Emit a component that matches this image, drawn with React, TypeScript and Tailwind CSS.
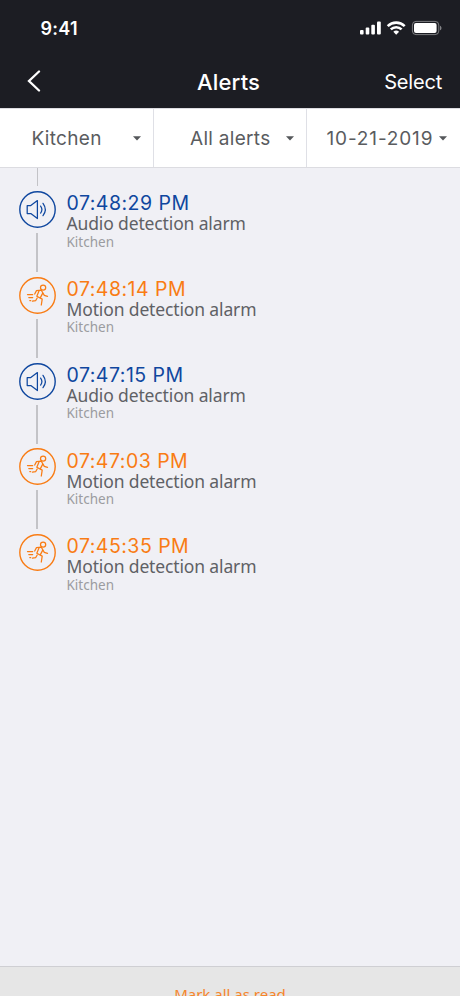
type AlertKind = 'audio' | 'motion';

interface AlertItem {
  id: number;
  kind: AlertKind;
  time: string;
  room: string;
}

const ALERTS: AlertItem[] = [
  { id: 1, kind: 'audio', time: '07:48:29 PM', room: 'Kitchen' },
  { id: 2, kind: 'motion', time: '07:48:14 PM', room: 'Kitchen' },
  { id: 3, kind: 'audio', time: '07:47:15 PM', room: 'Kitchen' },
  { id: 4, kind: 'motion', time: '07:47:03 PM', room: 'Kitchen' },
  { id: 5, kind: 'motion', time: '07:45:35 PM', room: 'Kitchen' },
];

const KIND_LABEL: Record<AlertKind, string> = {
  audio: 'Audio detection alarm',
  motion: 'Motion detection alarm',
};

const KIND_COLOR: Record<AlertKind, string> = {
  audio: 'text-[#0f479f]',
  motion: 'text-[#f97c14]',
};

function StatusIcons() {
  return (
    <svg width="84" height="16" viewBox="0 0 84 16" fill="#fff">
      {/* Signal */}
      <rect x="2" y="10" width="3.6" height="4.6" rx="1" />
      <rect x="7.7" y="7.6" width="3.6" height="7" rx="1" />
      <rect x="13.3" y="4.8" width="3.6" height="9.8" rx="1" />
      <rect x="19" y="1.6" width="3.8" height="13" rx="1" />
      {/* Wifi */}
      <g fill="none" stroke="#fff" strokeWidth="2.6">
        <path d="M29.7 6.1a12.2 12.2 0 0 1 17 0" />
        <path d="M32.8 9.4a7.8 7.8 0 0 1 10.8 0" />
      </g>
      <path d="M38.2 14.8l-2.9-3a4.3 4.3 0 0 1 5.8 0z" />
      {/* Battery */}
      <rect x="54.4" y="1.4" width="26.4" height="13.2" rx="3.6" fill="none" stroke="#fff" strokeOpacity="0.42" strokeWidth="1" />
      <rect x="56" y="3" width="22.6" height="10" rx="2" />
      <path d="M82 5.7v4.6c.9-.4 1.5-1.2 1.5-2.3s-.6-1.9-1.5-2.3z" fillOpacity="0.45" />
    </svg>
  );
}

function AlertIcon({ kind }: { kind: AlertKind }) {
  return (
    <svg
      className="size-[37px] shrink-0"
      viewBox="0 0 37 37"
      fill="none"
      stroke="currentColor"
      strokeWidth="1.25"
      strokeLinecap="round"
      strokeLinejoin="round"
    >
      <circle cx="18.5" cy="18.5" r="17.7" strokeWidth="1.4" />
      {kind === 'audio' ? (
        <>
          <path d="M8.2 14.6h3.6l6.6-5v18l-6.6-5H8.2z" />
          <path d="M21.6 15.1q2.6 3.5 0 7" />
          <path d="M24 12.3q4.6 6.2 0 12.4" />
        </>
      ) : (
        <>
          <circle cx="24.1" cy="10.6" r="2.6" />
          <path d="M15.7 17l1.8-3.4 4.8-.4 3 5.2 3.2 1" />
          <path d="M20.2 13.6l-2.4 5.6 5.4 2.9-.9 5.9" />
          <path d="M23.6 16.4l-2.2 4.2" />
          <path d="M18.2 21l-1.6 2.7-3.2.5" />
          <path d="M8.5 17.6h5.2M9.8 20.6h3.9M10.8 23.5h.9" />
        </>
      )}
    </svg>
  );
}

interface FilterButtonProps {
  label: string;
  className: string;
  labelClass: string;
}

function FilterButton({ label, className, labelClass }: FilterButtonProps) {
  return (
    <button className={`flex h-full items-center justify-between ${className}`}>
      <span className={`pt-[2px] text-[19px] leading-6 ${labelClass}`}>{label}</span>
      <svg width="8" height="5" viewBox="0 0 8 5" fill="#55575a">
        <path d="M0 .3h8L4 4.6z" />
      </svg>
    </button>
  );
}

function AlertRow({ alert, isLast }: { alert: AlertItem; isLast: boolean }) {
  return (
    <li className="flex h-[85.8px] pl-[18.5px]">
      <div className={`flex w-[37px] flex-col items-center ${KIND_COLOR[alert.kind]}`}>
        <AlertIcon kind={alert.kind} />
        {!isLast && <div className="mt-[5px] h-[39px] w-[1.5px] bg-[#c3c3c7]" />}
      </div>
      <div className="ml-[11px] pt-[1.3px] whitespace-nowrap">
        <div className={`text-[19.5px] leading-[22px] tracking-[0.48px] ${KIND_COLOR[alert.kind]}`}>
          {alert.time}
        </div>
        <div className="font-['Noto_Sans'] text-[17.5px] leading-[19px] tracking-[-0.14px] text-[#5f6165]">
          {KIND_LABEL[alert.kind]}
        </div>
        <div className="pt-[0.4px] font-['Noto_Sans'] text-[13.5px] leading-[17px] text-[#9b9ca0]">{alert.room}</div>
      </div>
    </li>
  );
}

export default function App() {
  return (
    <div className="flex h-[996px] w-[460px] flex-col overflow-hidden bg-[#f0f0f5] font-['Inter',sans-serif]">
      <header className="h-[108px] shrink-0 bg-[#1c1d23] text-white">
        <div className="flex h-[56px] items-center justify-between pr-[18px] pl-[40.5px]">
          <span className="pt-[2px] text-[18px] font-semibold leading-6 tracking-[0.3px]">9:41</span>
          <StatusIcons />
        </div>
        <div className="flex h-[52px] items-center justify-between pr-[18px] pl-[27px]">
          <svg className="mb-[2px]" width="14" height="22" viewBox="0 0 14 22" fill="none" stroke="#fff" strokeWidth="2.3" strokeLinecap="round">
            <path d="M12 1.5L2 11l10 9.5" />
          </svg>
          <h1 className="ml-[32px] text-[22px] font-medium leading-7 tracking-[0.15px]">Alerts</h1>
          <button className="text-[20px] leading-6 tracking-[-0.2px]">Select</button>
        </div>
      </header>

      <nav className="flex h-[60px] shrink-0 border-y border-[#dcdce1] bg-white text-[#5a5c5f]">
        <FilterButton
          label="Kitchen"
          className="w-[154px] border-r border-[#dfe0e6] pr-[12px] pl-[31.5px]"
          labelClass="tracking-[0.3px]"
        />
        <FilterButton
          label="All alerts"
          className="w-[153px] border-r border-[#dfe0e6] pr-[12px] pl-[36px]"
          labelClass="tracking-[0.3px]"
        />
        <FilterButton label="10-21-2019" className="w-[153px] pr-[13px] pl-[19.5px]" labelClass="tracking-[0.85px]" />
      </nav>

      <main className="flex-1">
        <div className="h-[23px] pl-[36.5px]">
          <div className="h-[18px] w-[1.5px] bg-[#c3c3c7]" />
        </div>
        <ul>
          {ALERTS.map((alert, i) => (
            <AlertRow key={alert.id} alert={alert} isLast={i === ALERTS.length - 1} />
          ))}
        </ul>
      </main>

      <footer className="flex h-[30px] shrink-0 items-start justify-center overflow-hidden border-t border-[#cfcfd3] bg-[#e6e6e6] pt-[15px]">
        <button className="font-['Noto_Sans'] text-[15px] leading-6 text-[#f5852b]">Mark all as read</button>
      </footer>
    </div>
  );
}
